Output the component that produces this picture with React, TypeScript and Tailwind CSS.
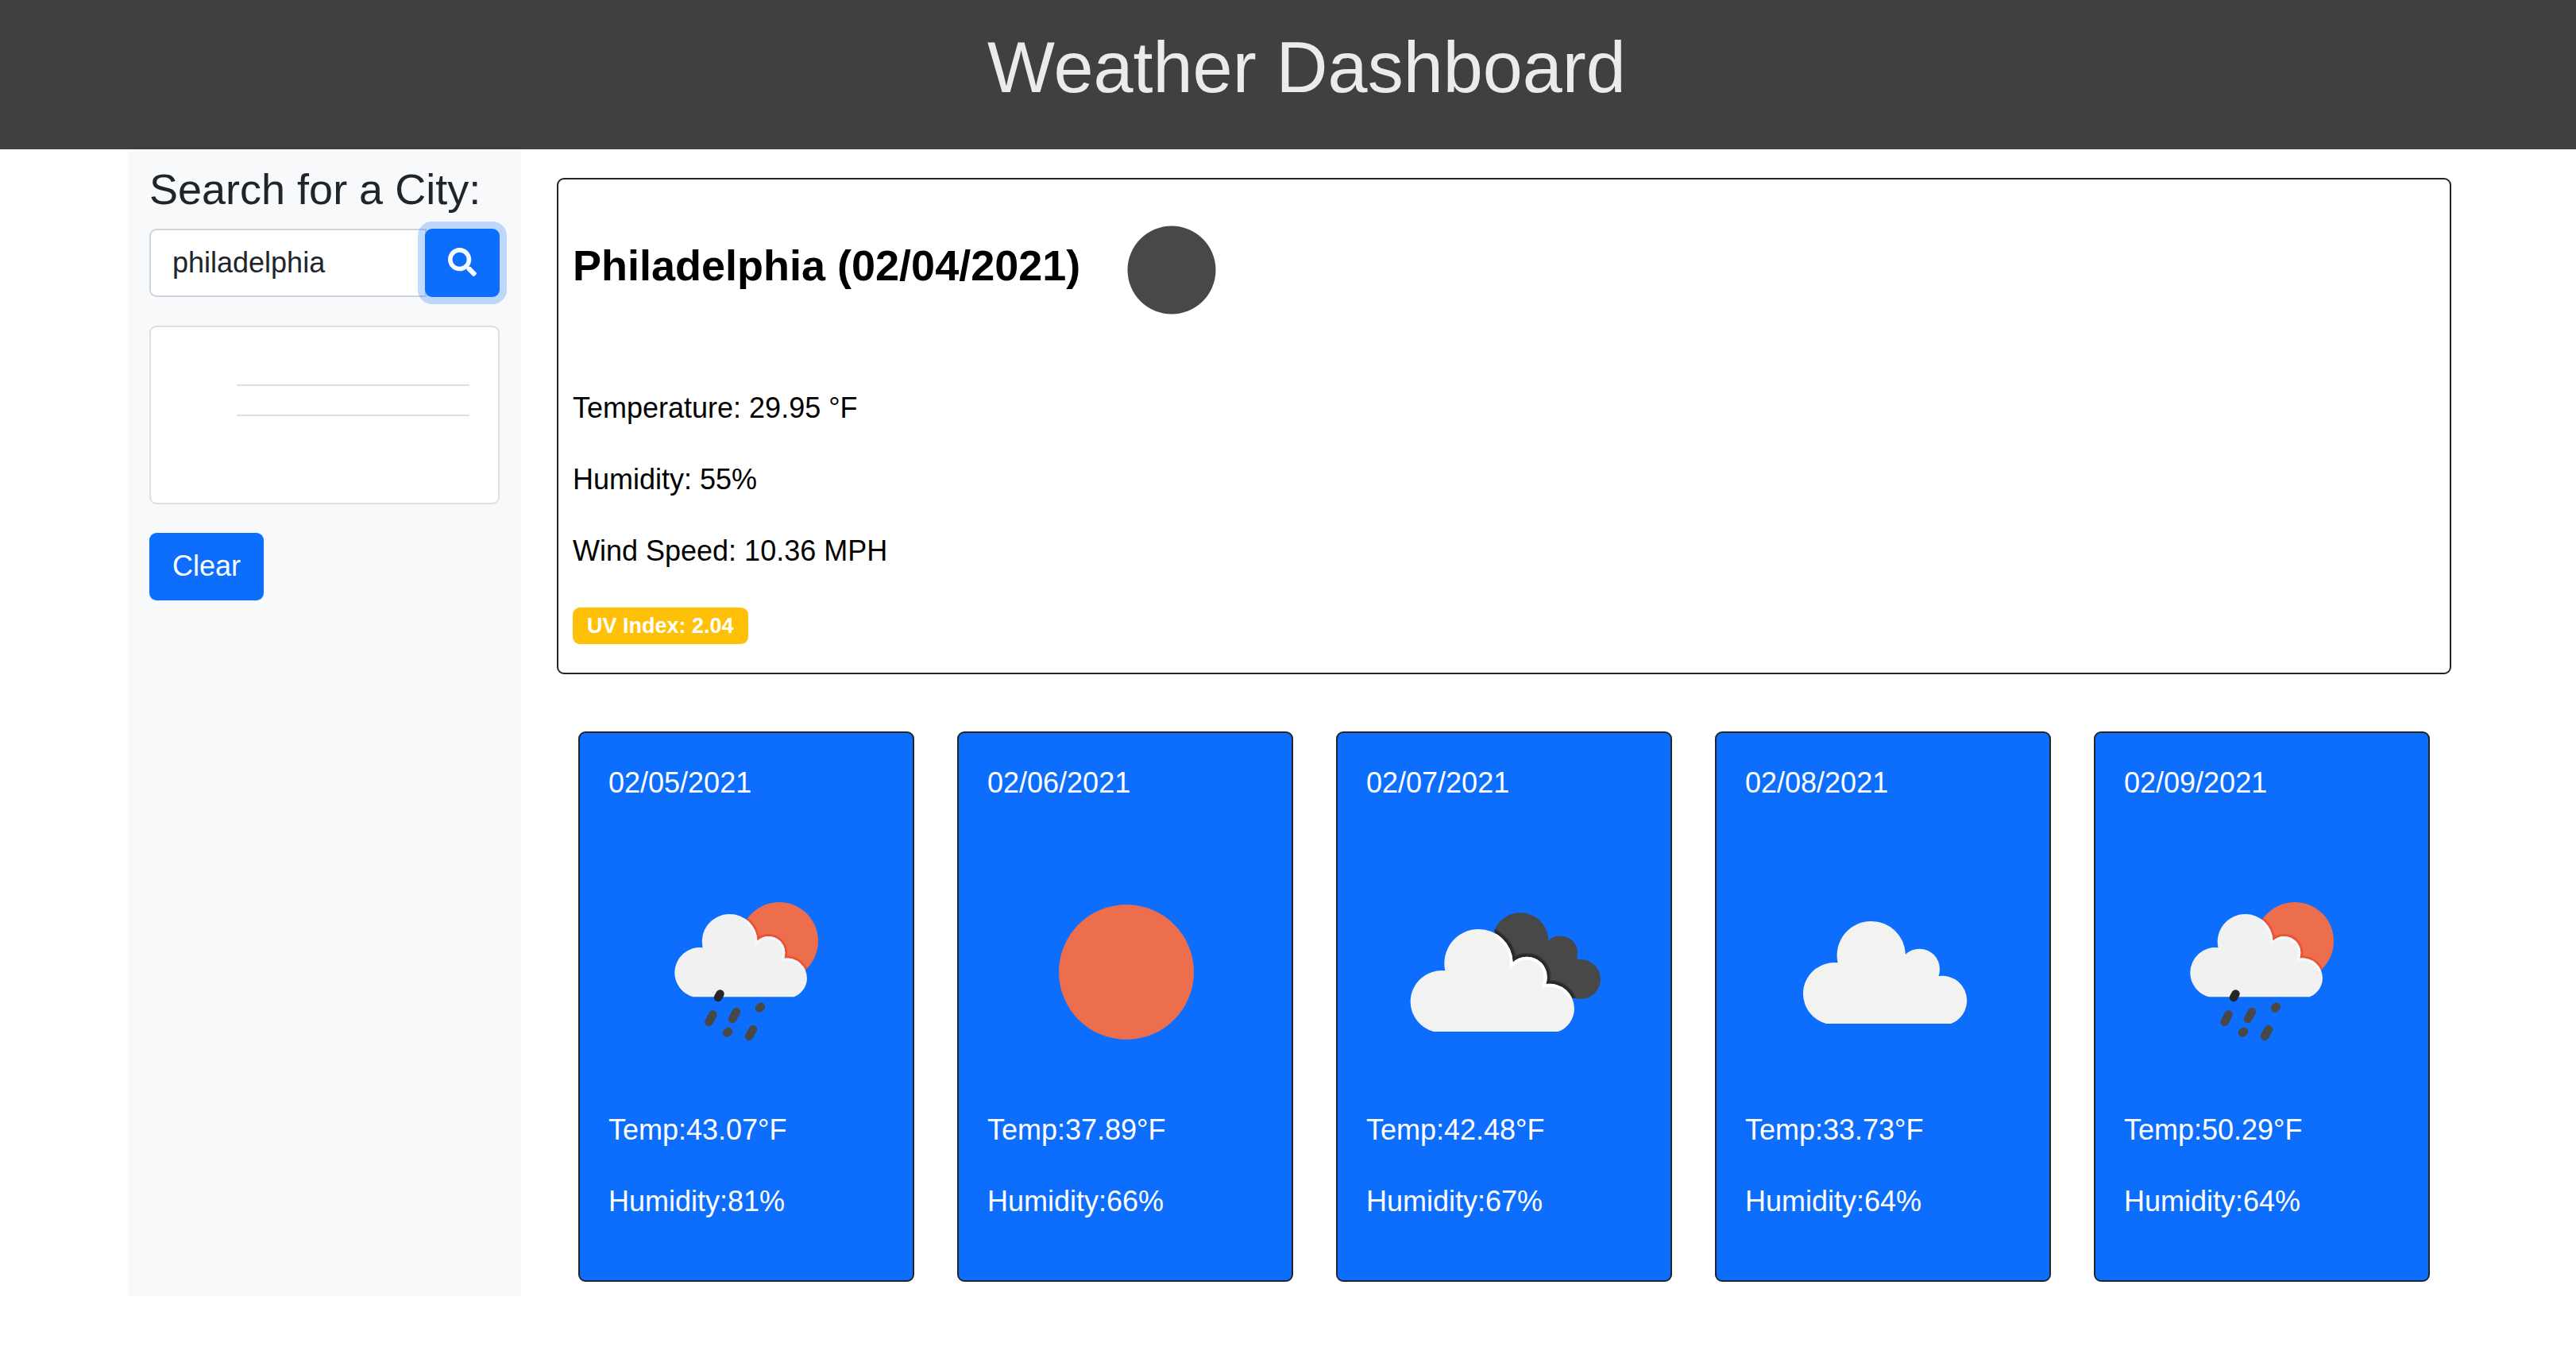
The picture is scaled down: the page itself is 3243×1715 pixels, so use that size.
import React from "react";
import { FaSearch } from "react-icons/fa";

const CLOUD =
  "M405 657A118 118 0 0 1 317 543A118 118 0 0 1 448 427A129 129 0 0 1 574 270A129 129 0 0 1 704 395A76 76 0 0 1 757 374A76 76 0 0 1 833 452A76 76 0 0 1 829 477A94 94 0 0 1 936 570A94 94 0 0 1 875 657Z";
const DARK_CLOUD =
  "M634 275A105 105 0 0 1 735 208A105 105 0 0 1 838 313A62 62 0 0 1 886 296A62 62 0 0 1 948 358L946 384A75 75 0 0 1 960 384A75 75 0 0 1 1035 459A75 75 0 0 1 960 534L936 530L700 500Z";

type IconName = "rain" | "sun" | "broken" | "cloud";

function RainIcon({ id }: { id: string }) {
  const sun = `${id}-sun`;
  const place = "translate(-2.1 29.3) scale(0.2693)";
  return (
    <>
      <defs>
        <clipPath id={sun}>
          <circle cx="215" cy="136" r="49" />
        </clipPath>
        <clipPath id={`${id}-cloud`}>
          <path d={CLOUD} />
        </clipPath>
      </defs>
      <circle cx="215" cy="136" r="49" fill="#ec6e4c" />
      <g clipPath={`url(#${sun})`}>
        <path d={CLOUD} transform={place} fill="none" stroke="#eb5433" strokeWidth="22" />
      </g>
      <path d={CLOUD} transform={place} fill="#f1f1f1" />
      <g clipPath={`url(#${sun})`}>
        <g transform={place}>
          <path d={CLOUD} clipPath={`url(#${id}-cloud)`} fill="none" stroke="#f3f8fd" strokeWidth="24" />
        </g>
      </g>
      <g stroke="#484848" strokeWidth="10.500" strokeLinecap="round">
        <path d="M140.500 202.500l-2.500 4.500" stroke="#262626" />
        <path d="M131.500 228.500l-5 9.500" />
        <path d="M161 225l-5 9" />
        <path d="M192 218.500l-2 2" />
        <path d="M151 250l-2 1.500" />
        <path d="M182 247l-5 9" />
      </g>
    </>
  );
}

function BrokenCloudsIcon({ id }: { id: string }) {
  return (
    <g transform="translate(-50 31) scale(0.3333)">
      <defs>
        <clipPath id={`${id}-back`}>
          <path d={DARK_CLOUD} />
        </clipPath>
        <clipPath id={`${id}-front`}>
          <path d={CLOUD} />
        </clipPath>
      </defs>
      <path d={DARK_CLOUD} fill="#484848" />
      <g clipPath={`url(#${id}-back)`}>
        <path d={CLOUD} fill="none" stroke="#383839" strokeWidth="30" />
        <path d={CLOUD} fill="none" stroke="#29292a" strokeWidth="20" />
      </g>
      <path d={CLOUD} fill="#f2f2f0" />
      <g clipPath={`url(#${id}-back)`}>
        <path d={CLOUD} clipPath={`url(#${id}-front)`} fill="none" stroke="#ffffff" strokeWidth="24" />
      </g>
    </g>
  );
}

function ForecastIcon({ name, id }: { name: IconName; id: string }) {
  return (
    <svg viewBox="0 0 347 347" className="block w-full" aria-hidden="true">
      {name === "rain" && <RainIcon id={id} />}
      {name === "sun" && <circle cx="175" cy="175" r="85" fill="#ec6e4c" />}
      {name === "broken" && <BrokenCloudsIcon id={id} />}
      {name === "cloud" && (
        <path d={CLOUD} transform="translate(-32.7 21) scale(0.3333)" fill="#f2f2f0" />
      )}
    </svg>
  );
}

const forecast: { date: string; icon: IconName; temp: string; humidity: string }[] = [
  { date: "02/05/2021", icon: "rain", temp: "43.07", humidity: "81" },
  { date: "02/06/2021", icon: "sun", temp: "37.89", humidity: "66" },
  { date: "02/07/2021", icon: "broken", temp: "42.48", humidity: "67" },
  { date: "02/08/2021", icon: "cloud", temp: "33.73", humidity: "64" },
  { date: "02/09/2021", icon: "rain", temp: "50.29", humidity: "64" },
];

export default function App() {
  return (
    <div className="bg-white font-['Liberation_Sans',Arial,sans-serif] text-[36px] leading-[54px] text-[#212529]">
      <header className="bg-[#404040] pt-[31px] pb-[49px] pl-[47px] text-center">
        <h1 className="text-[90px] leading-[108px] text-[#ebebeb]">Weather Dashboard</h1>
      </header>

      <div className="flex gap-[45px] pr-[157px] pl-[161px]">
        <aside className="w-[495px] shrink-0 bg-[#f8f9fa] px-[27px] pt-[18px]">
          <label htmlFor="city" className="mb-[18px] block text-[54px] leading-[64px] whitespace-nowrap">
            Search for a City:
          </label>
          <form className="mb-[36px] flex" onSubmit={(e) => e.preventDefault()}>
            <input
              id="city"
              type="text"
              defaultValue="philadelphia"
              className="h-[86px] min-w-0 flex-1 rounded-l-[9px] border-2 border-[#ced4da] bg-white px-[27px] outline-none"
            />
            <button
              type="submit"
              aria-label="Search"
              className="relative -ml-[2px] flex h-[86px] w-[94px] items-center justify-center rounded-[9px] bg-[#0d6efd] pb-[2px] text-[#f8f9fa] shadow-[0_0_0_9px_rgba(13,110,253,0.25)]"
            >
              <FaSearch />
            </button>
          </form>
          <div className="mb-[36px] rounded-[9px] border-2 border-[#dfdfdf] bg-white p-[36px]">
            <ul className="ml-[72px] pb-[37px]">
              <li className="h-[38px] border-b-2 border-[#dfdfdf]" />
              <li className="h-[38px] border-b-2 border-[#dfdfdf]" />
              <li className="h-[36px]" />
            </ul>
          </div>
          <button type="button" className="rounded-[9px] bg-[#0d6efd] px-[29px] pt-[15px] pb-[16px] text-white">
            Clear
          </button>
        </aside>

        <main className="min-w-0 flex-1 pt-[36px] pb-[18px]">
          <section className="rounded-[9px] border-2 border-[#212529] px-[18px] pt-px pb-[36px] text-black">
            <h2 className="mb-[35px] text-[54px] leading-[64px] font-bold">
              Philadelphia (02/04/2021)
              <svg viewBox="0 0 225 225" className="inline-block size-[225px] align-[-99px]" aria-hidden="true">
                <circle cx="115" cy="113" r="55.500" fill="#484849" />
              </svg>
            </h2>
            <p className="mb-[36px]">Temperature: 29.95 °F</p>
            <p className="mb-[36px]">Humidity: 55%</p>
            <p className="mb-[44px]">Wind Speed: 10.36 MPH</p>
            <p className="w-fit rounded-[9px] bg-[#ffc107] px-[18px] py-[9px] text-[27px] leading-[28px] font-bold text-white">
              UV Index: 2.04
            </p>
          </section>

          <section className="mt-[72px] grid grid-cols-5 gap-[54px] px-[27px]">
            {forecast.map((day, i) => (
              <article
                key={day.date}
                className="rounded-[9px] border-2 border-[#212529] bg-[#0d6efd] p-[36px] text-white"
              >
                <p className="mb-[36px]">{day.date}</p>
                <ForecastIcon name={day.icon} id={`day${i}`} />
                <p className="mb-[36px]">{`Temp:${day.temp}°F`}</p>
                <p className="mb-[36px]">{`Humidity:${day.humidity}%`}</p>
              </article>
            ))}
          </section>
        </main>
      </div>
    </div>
  );
}
